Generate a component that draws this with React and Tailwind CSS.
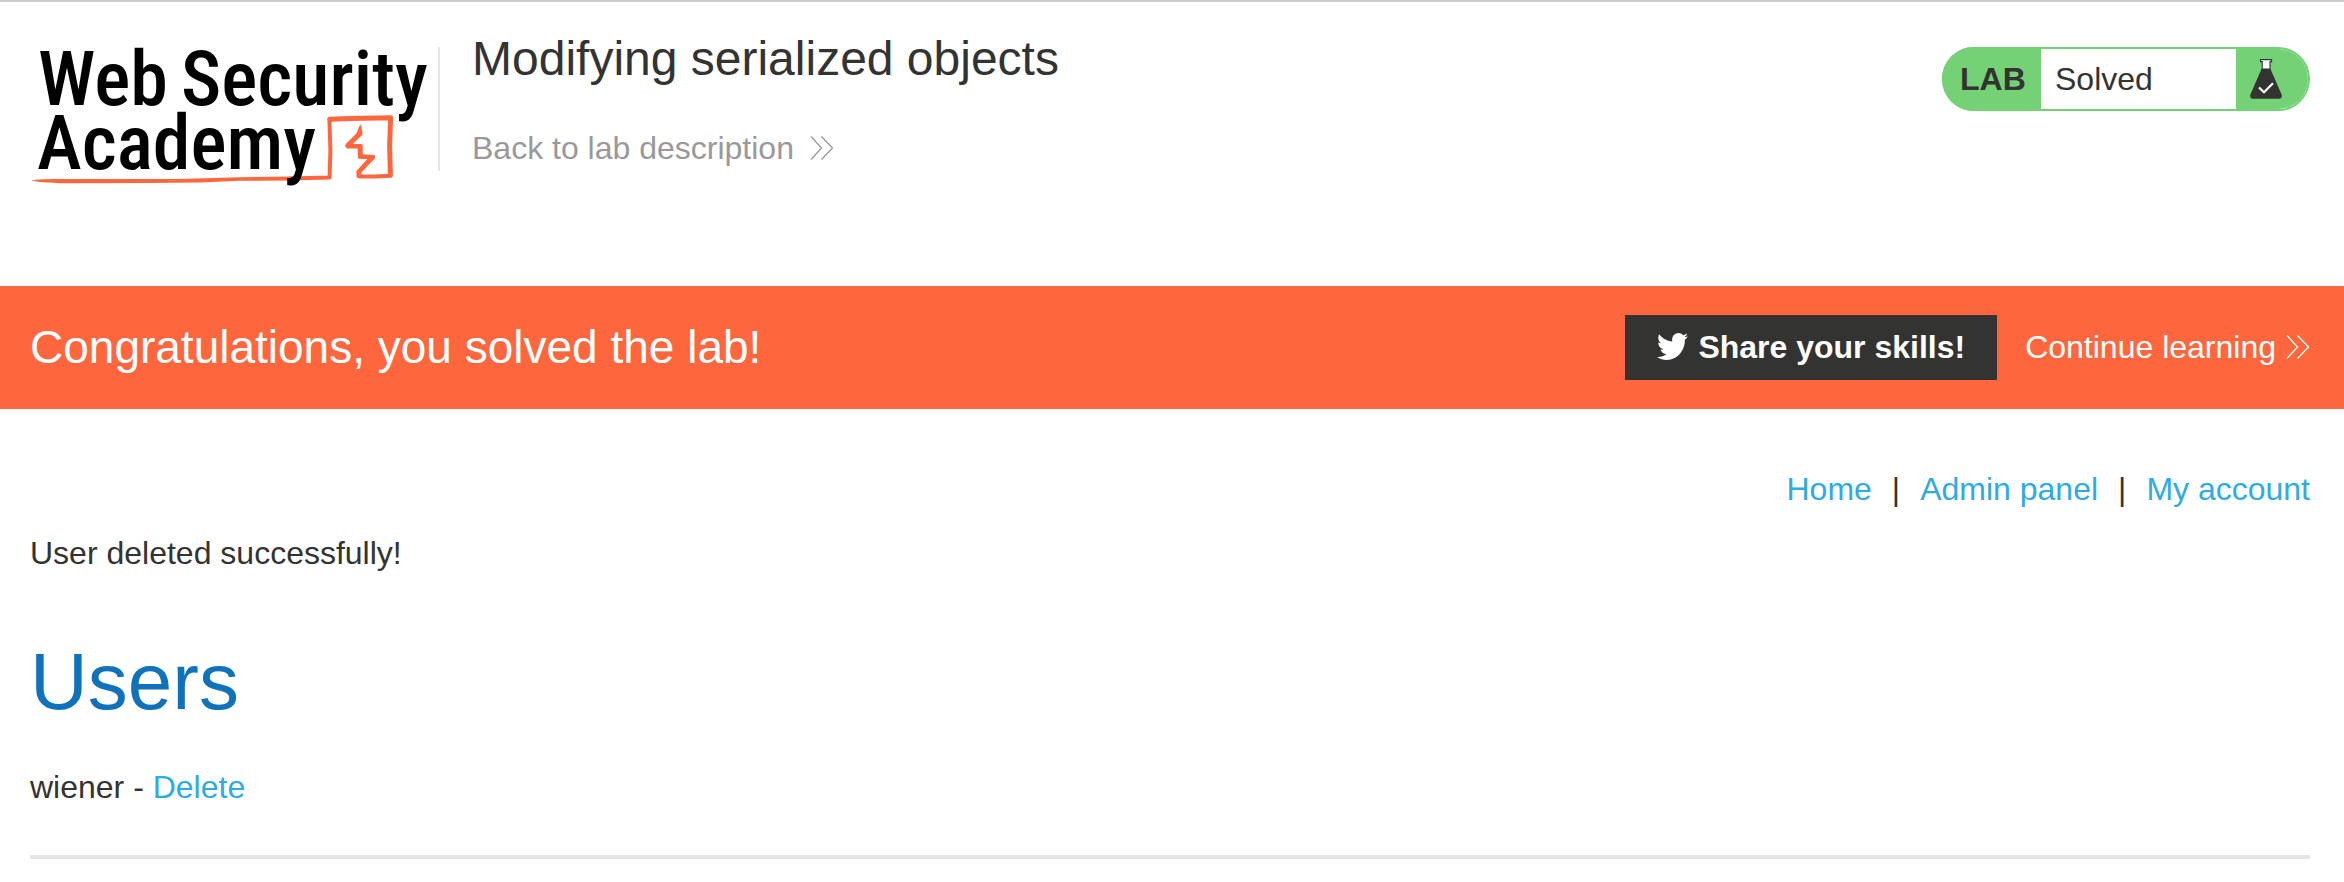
import { FaTwitter } from "react-icons/fa";

const navLinks = ["Home", "Admin panel", "My account"];
const users = ["wiener"];

function Logo() {
  return (
    <svg viewBox="30 40 402 150" className="w-[402px] h-[150px] mt-[10px] shrink-0 overflow-visible" role="img" aria-label="Web Security Academy">
      <g fill="none" stroke="#fe673d" strokeLinejoin="round" strokeLinecap="round">
        <path strokeWidth="4" d="M290 178.6 L329.6 177.4 L330.4 150 L329.4 119" />
        <path strokeWidth="5" d="M330 119.2 L350 118.4 L390.6 117.8 L389.6 146 L390.4 175" />
        <path strokeWidth="4" d="M390 175.8 L376 176.4 L359.4 176.4 L358.8 171.6 L373 157.2 L360.4 156.6 L360.4 146 L347.4 146 L360 133.6" />
      </g>
      <path d="M31 180.4 C40 179 50 179 60 179 L180 179 L240 177.2 L292 176.6 L292 180.6 L240 180.8 L200 182.6 L150 183 L60 183.2 C48 182.8 38 181.8 31 180.4 Z" fill="#fe673d" />
      <path d="M360.3 124.2 C358 129 357 132 356.4 133.4 L345.4 144.6 L348 148.2 L362.6 134.6 C362 130 361.8 127 360.3 124.2 Z" fill="#fe673d" />
      <path d="M345.2 145.4 L350 141.5 L353 144.2 L362.6 144.6 L362.6 154.4 L374.6 155 L375 158 L361.4 172.4 L361 178.2 L356.6 177.4 L356.4 171 L367.4 159 L358 158.6 L357.6 148.6 L347 148.6 Z" fill="#fe673d" />
      <g className="font-['Roboto_Condensed',Roboto,sans-serif] font-medium text-[76px]" fill="#000">
        <text x="38" y="105">Web</text>
        <text x="181" y="105">Security</text>
        <text x="37" y="169">Academy</text>
      </g>
    </svg>
  );
}

function Chevrons() {
  return (
    <svg viewBox="0 0 24 24" className="w-6 h-6 shrink-0" fill="none" stroke="currentColor" strokeWidth="1.3" aria-hidden="true">
      <path d="M1 0.5 L11.5 12 L1 23.5 M11.5 0.5 L22.5 12 L11.5 23.5" />
    </svg>
  );
}

function Flask() {
  return (
    <svg viewBox="0 0 32 40" className="w-8 h-10" aria-hidden="true">
      <path d="M11.5 10 H20.5 L31.6 35.6 C32.4 38 31 39.8 28.8 39.8 H3.2 C1 39.8 -0.4 38 0.4 35.6 Z" fill="#333332" />
      <path d="M10.5 0.6 H21.6 V2.6 H20 V10 H12.2 V2.6 H10.5 Z" fill="#fff" stroke="#333332" strokeWidth="1.1" />
      <path d="M9 28.5 L14 33.3 L23 24.2" fill="none" stroke="#fff" strokeWidth="2.2" />
    </svg>
  );
}

function LabStatus() {
  return (
    <div className="ml-auto mt-[17px] flex h-16 w-[368px] shrink-0 rounded-full border-2 border-[#75d175]">
      <p className="-my-[2px] -ml-[2px] flex w-[99px] items-center rounded-l-full bg-[#75d175] pl-[18px] font-bold">LAB</p>
      <p className="flex flex-1 items-center pl-[14px]">Solved</p>
      <span className="flex w-[72px] items-center rounded-r-full bg-[#75d175] pl-[14px]"><Flask /></span>
    </div>
  );
}

export default function App() {
  return (
    <div className="min-h-screen bg-white border-t-2 border-[#cccccc] font-['Liberation_Sans',Arial,sans-serif] text-[32px] leading-[48px] text-[#333332]">
      <header className="flex items-start pl-[30px] pr-[34px] pt-7 pb-24">
        <Logo />
        <div className="ml-[6px] mt-[17px] h-[124px] w-[2px] shrink-0 bg-[#e5e5e5]" />
        <div className="ml-8 pb-4">
          <h2 className="text-[48px] leading-[58px]">Modifying serialized objects</h2>
          <a href="#" className="mt-9 flex items-center gap-4 text-[#999999]">
            Back to lab description
            <Chevrons />
          </a>
        </div>
        <LabStatus />
      </header>

      <section className="flex items-center bg-[#fe673d] pl-[30px] pr-[34px] py-[29px] text-white">
        <h4 className="text-[46px] leading-[65px]">Congratulations, you solved the lab!</h4>
        <button type="button" className="ml-auto flex h-[65px] items-center gap-[10px] bg-[#333332] px-8 pb-[2px] font-bold">
          <FaTwitter className="h-[27px] w-[31px]" viewBox="0 48 512 416" preserveAspectRatio="none" />
          Share your skills!
        </button>
        <a href="#" className="ml-7 flex items-center gap-[10px] pb-[2px]">
          Continue learning
          <Chevrons />
        </a>
      </section>

      <main className="pl-[30px] pr-[34px] pt-14">
        <nav className="flex justify-end gap-5">
          {navLinks.map((label, i) => (
            <span key={label} className="flex gap-5">
              {i > 0 && <span>|</span>}
              <a href="#" className="text-[#2fabe4]">{label}</a>
            </span>
          ))}
        </nav>
        <p className="mt-4">User deleted successfully!</p>
        <h1 className="mt-14 text-[80px] leading-[98px] text-[#1072bb]">Users</h1>
        {users.map((name) => (
          <div key={name} className="mt-8">
            <span>{name} - </span>
            <a href="#" className="text-[#2fabe4]">Delete</a>
          </div>
        ))}
        <hr className="mt-11 border-t-4 border-[#e5e5e5]" />
      </main>
    </div>
  );
}
